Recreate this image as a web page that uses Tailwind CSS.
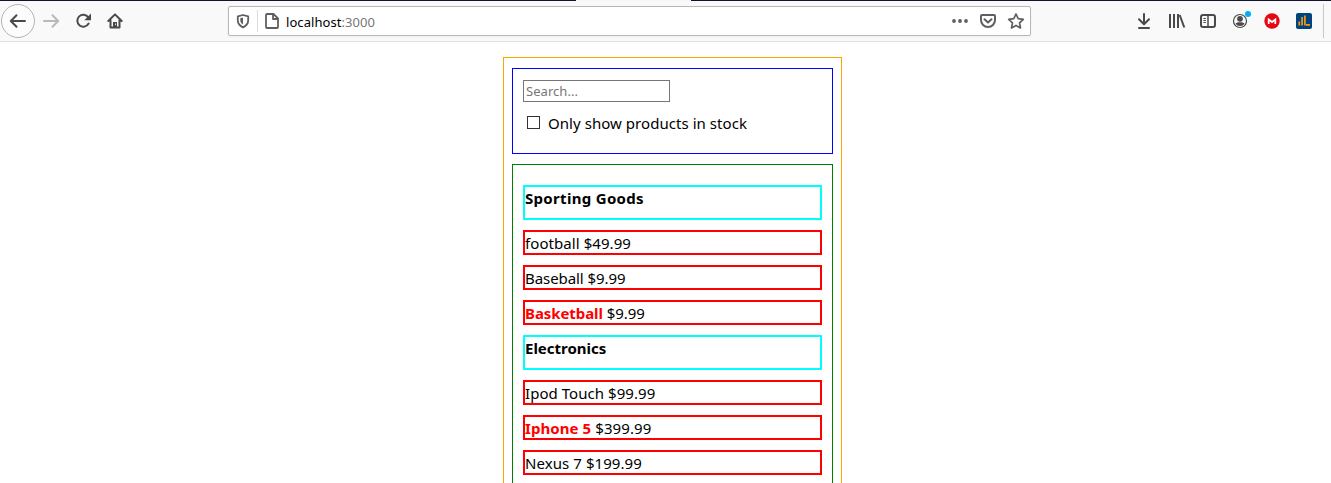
<!DOCTYPE html>
<html lang="en">
<head>
<meta charset="utf-8">
<title>localhost:3000</title>
<script src="https://cdn.jsdelivr.net/npm/@tailwindcss/browser@4"></script>
</head>
<body class="w-[1331px] h-[483px] overflow-hidden bg-white font-['Noto_Sans','Open_Sans',sans-serif] text-black">
<div class="flex h-px">
  <div class="w-[576px] bg-[#14122f]"></div>
  <div class="w-[115px] bg-[#f5f6f7]"></div>
  <div class="grow bg-[#14122f]"></div>
</div>
<header class="flex h-[41px] items-start border-b border-[#e0e0e1] bg-[#f9f9fa]">
  <svg class="h-[40px] w-[228px] shrink-0" viewBox="0 1 228 40" fill="none" stroke="#4a4a4b" stroke-width="2" stroke-linecap="round" stroke-linejoin="round">
    <circle cx="18" cy="21" r="16.5" fill="#fcfcfc" stroke="#b4b4b5" stroke-width="1"/>
    <path d="M11 21H25M16.5 15.2L10.8 21l5.7 5.8"/>
    <path stroke="#b9b9ba" d="M44 21H58M52.5 15.2L58.200 21l-5.700 5.800"/>
    <path d="M88.300 17.400A6 6 0 1 0 88.600 23.600"/>
    <path fill="#4a4a4b" stroke="none" d="M91 13.500v6.700h-6.700z"/>
    <path d="M108.300 21L115 14.400l6.700 6.600M110.500 20v7.500h9V20"/>
    <path stroke="none" fill="#4a4a4b" d="M113 22h4v5h-4z"/>
    <path stroke="#f9f9fa" stroke-width="1" d="M115.500 24v.5"/>
  </svg>
  <div class="mt-[5px] flex h-[30px] w-[803px] shrink-0 rounded-[2px] border border-[#b8b8b9] bg-white shadow-[0_1px_3px_rgba(0,0,0,0.05)]">
    <svg class="h-[28px] w-[56px] shrink-0" viewBox="229 7 56 28" fill="none" stroke="#5f5f60" stroke-width="1.800" stroke-linejoin="round">
      <path d="M243 15l5.200 1.400v3.800c0 3.200-2 5.600-5.200 7.200c-3.200-1.600-5.200-4-5.200-7.200v-3.800z"/>
      <path fill="#5f5f60" stroke="none" d="M243 17.500v7c-1.700-1-2.700-2.300-2.700-4.300v-2z"/>
      <path stroke="#dcdcdd" stroke-width="1" d="M257.500 10v22"/>
      <path d="M267 14h6.500l4.500 4.500v8.500a1 1 0 0 1-1 1h-10a1 1 0 0 1-1-1v-12a1 1 0 0 1 1-1zM273 14v5h5"/>
    </svg>
    <div class="pt-[6px] pl-px text-[13px] leading-[18px] tracking-[0.06px] whitespace-nowrap"><span>localhost</span><span class="text-[#777]">:3000</span></div>
    <svg class="ml-auto h-[28px] w-[85px] shrink-0" viewBox="945 7 85 28" fill="none" stroke="#5f5f60" stroke-width="2" stroke-linejoin="round" stroke-linecap="round">
      <g fill="#5f5f60" stroke="none"><circle cx="954" cy="21" r="1.900"/><circle cx="960" cy="21" r="1.900"/><circle cx="966" cy="21" r="1.900"/></g>
      <path d="M982 15h12a1 1 0 0 1 1 1v4a7 7 0 0 1-14 0v-4a1 1 0 0 1 1-1zM984.500 19.300l3.500 3.300 3.500-3.300"/>
      <path stroke-width="1.700" d="M1016 14l2.200 4.700 5.100.6-3.800 3.500 1 5.200-4.500-2.600-4.500 2.600 1-5.200-3.800-3.500 5.100-.6z"/>
    </svg>
  </div>
  <svg class="h-[40px] w-[300px] shrink-0" viewBox="1031 1 300 40" fill="none" stroke="#4a4a4b" stroke-width="2" stroke-linecap="round" stroke-linejoin="round">
    <path d="M1144 14v10M1139 19.300l5 5 5-5M1139 28h10"/>
    <path stroke-linecap="butt" d="M1170 14v14M1174 14v14M1178 14v14M1179.700 15l4.600 12.500"/>
    <rect x="1201" y="15" width="14" height="12" rx="2"/>
    <path stroke-width="1.500" d="M1208 15v12"/>
    <path stroke-width="1" d="M1203.800 18.500h1.700M1203.800 20.500h1.700M1203.800 22.500h1.700"/>
    <circle cx="1240" cy="21" r="6.500" stroke-width="1.200"/>
    <circle cx="1240" cy="18.800" r="2.900" fill="#4a4a4b" stroke="none"/>
    <path fill="#4a4a4b" stroke="none" d="M1235.500 23.500c1-.9 2.500-1.200 4.500-1.200s3.500.3 4.500 1.200c-1 1.700-2.500 2.500-4.500 2.500s-3.500-.8-4.500-2.500z"/>
    <circle cx="1248" cy="14" r="3" fill="#00adf2" stroke="none"/>
    <circle cx="1272" cy="21" r="7.700" fill="#e50914" stroke="none"/>
    <path stroke="#fff" stroke-width="1.800" stroke-linecap="butt" stroke-linejoin="miter" d="M1268.700 24v-4.500l3.300 2.500 3.300-2.500V24"/>
    <rect x="1296" y="13" width="16" height="16" rx="2" fill="#00437f" stroke="none"/>
    <path stroke="#f49b12" stroke-linecap="butt" stroke-width="1.700" d="M1299.300 25.500v-4M1302.100 25.500V17M1304.900 25.500V15.500M1306 24.800h4"/>
    <path stroke="#c8c8c9" stroke-width="1" stroke-linecap="butt" d="M1323.500 4v34"/>
  </svg>
</header>
<main class="mt-[15px] ml-[503px] h-[426px] w-[339px] overflow-hidden border border-b-0 border-[#ffa500] px-2 pt-[10px] text-[15px] leading-[21px] whitespace-nowrap">
  <section class="h-[86px] w-[321px] border border-[#0000ff] px-[10px] pt-[11px]">
    <div class="h-[22px] w-[147px] border border-[#767676] pl-[2px] text-[13px] leading-[20px] tracking-[0.05px] text-[#777]">Search...</div>
    <div class="mt-[11px] flex">
      <div class="mt-[3px] ml-[4px] size-[13px] border border-[#333]"></div>
      <span class="ml-[8px] tracking-[0.05px]">Only show products in stock</span>
    </div>
  </section>
  <section class="mt-[10px] flex h-[319px] w-[321px] flex-col gap-[10px] border border-b-0 border-[#008000] px-[10px] pt-[20px] leading-[23px]">
    <div class="h-[35px] w-[299px] shrink-0 border-2 border-[#00ffff] font-bold"><span class="tracking-[0.31px]">Sporting Goods</span></div>
    <div class="h-[25px] w-[299px] shrink-0 border-2 border-[#ff0000]"><span class="tracking-[0.07px]">football $49.99</span></div>
    <div class="h-[25px] w-[299px] shrink-0 border-2 border-[#ff0000]"><span class="tracking-[-0.07px]">Baseball $9.99</span></div>
    <div class="h-[25px] w-[299px] shrink-0 border-2 border-[#ff0000] tracking-[-0.08px]"><span class="font-bold text-[#ff0000]">Basketball</span> $9.99</div>
    <div class="h-[35px] w-[299px] shrink-0 border-2 border-[#00ffff] font-bold"><span>Electronics</span></div>
    <div class="h-[25px] w-[299px] shrink-0 border-2 border-[#ff0000]"><span class="tracking-[0.05px]">Ipod Touch $99.99</span></div>
    <div class="h-[25px] w-[299px] shrink-0 border-2 border-[#ff0000] tracking-[0.08px]"><span class="font-bold text-[#ff0000]">Iphone 5</span> $399.99</div>
    <div class="h-[25px] w-[299px] shrink-0 border-2 border-[#ff0000]"><span class="tracking-[0.07px]">Nexus 7 $199.99</span></div>
  </section>
</main>
</body>
</html>
